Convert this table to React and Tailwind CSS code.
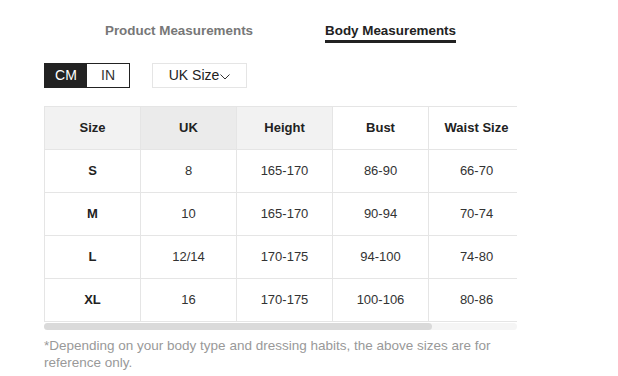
import React, { useState } from 'react';

const rows = [
  { size: 'S', uk: '8', height: '165-170', bust: '86-90', waist: '66-70' },
  { size: 'M', uk: '10', height: '165-170', bust: '90-94', waist: '70-74' },
  { size: 'L', uk: '12/14', height: '170-175', bust: '94-100', waist: '74-80' },
  { size: 'XL', uk: '16', height: '170-175', bust: '100-106', waist: '80-86' },
];

const SizeGuide = () => {
  const [tab, setTab] = useState('body');
  const [unit, setUnit] = useState('cm');

  return (
    <div className="w-[618px] h-[376px] bg-white pl-[44px] pt-[22px] font-['Liberation_Sans',Arial,sans-serif]">
      <div className="w-[473px]">
        {/* tabs */}
        <div className="flex justify-center gap-[72px] text-[13.4px] font-bold leading-[18px]">
          <button
            onClick={() => setTab('product')}
            className={`border-b-[3px] ${tab === 'product' ? 'text-[#222] border-[#222]' : 'text-[#777] border-transparent'}`}
          >
            Product Measurements
          </button>
          <button
            onClick={() => setTab('body')}
            className={`border-b-[3px] ${tab === 'body' ? 'text-[#222] border-[#222]' : 'text-[#777] border-transparent'}`}
          >
            Body Measurements
          </button>
        </div>

        {/* unit + size system */}
        <div className="flex items-center mt-[20px] h-[25px]">
          <div className="flex h-[25px] border border-[#222] text-[14px]">
            <button
              onClick={() => setUnit('cm')}
              className={`w-[42px] h-full flex items-center justify-center ${unit === 'cm' ? 'bg-[#222] text-white' : 'text-[#333]'}`}
            >
              CM
            </button>
            <button
              onClick={() => setUnit('in')}
              className={`w-[42px] h-full flex items-center justify-center ${unit === 'in' ? 'bg-[#222] text-white' : 'text-[#333]'}`}
            >
              IN
            </button>
          </div>
          <div className="ml-[22px] w-[95px] h-[25px] border border-[#e5e5e5] flex items-center justify-center text-[14px] text-[#222]">
            UK Size
            <svg width="10" height="6" viewBox="0 0 10 6" className="ml-[1px] mt-[2px]">
              <path d="M0.5 0.5 L5 5 L9.5 0.5" fill="none" stroke="#333" strokeWidth="1" />
            </svg>
          </div>
        </div>

        {/* table (scrolls horizontally) */}
        <div className="mt-[18px] w-[473px] overflow-hidden">
          <table className="w-[480px] table-fixed border-collapse text-[13px] text-[#333] text-center">
            <thead>
              <tr className="h-[43px] text-[#222]">
                <th className="w-[96px] border border-[#e5e5e5] bg-[#f2f2f2] font-bold">Size</th>
                <th className="w-[96px] border border-[#e5e5e5] bg-[#ebebeb] font-bold">UK</th>
                <th className="w-[96px] border border-[#e5e5e5] bg-[#f2f2f2] font-bold">Height</th>
                <th className="w-[96px] border border-[#e5e5e5] bg-white font-bold">Bust</th>
                <th className="w-[96px] border border-[#e5e5e5] bg-white font-bold">Waist Size</th>
              </tr>
            </thead>
            <tbody>
              {rows.map((r) => (
                <tr key={r.size} className="h-[43px]">
                  <td className="border border-[#e5e5e5] font-bold text-[#222]">{r.size}</td>
                  <td className="border border-[#e5e5e5]">{r.uk}</td>
                  <td className="border border-[#e5e5e5]">{r.height}</td>
                  <td className="border border-[#e5e5e5]">{r.bust}</td>
                  <td className="border border-[#e5e5e5]">{r.waist}</td>
                </tr>
              ))}
            </tbody>
          </table>
        </div>
        {/* scroll track */}
        <div className="mt-[1px] h-[7px] w-[473px] bg-[#f5f5f5] rounded-full">
          <div className="h-full w-[388px] bg-[#dadada] rounded-full" />
        </div>

        <p className="mt-[7px] text-[13.5px] leading-[17px] text-[#999]">
          *Depending on your body type and dressing habits, the above sizes are for reference only.
        </p>
      </div>
    </div>
  );
};

export default function App() {
  return <SizeGuide />;
}
